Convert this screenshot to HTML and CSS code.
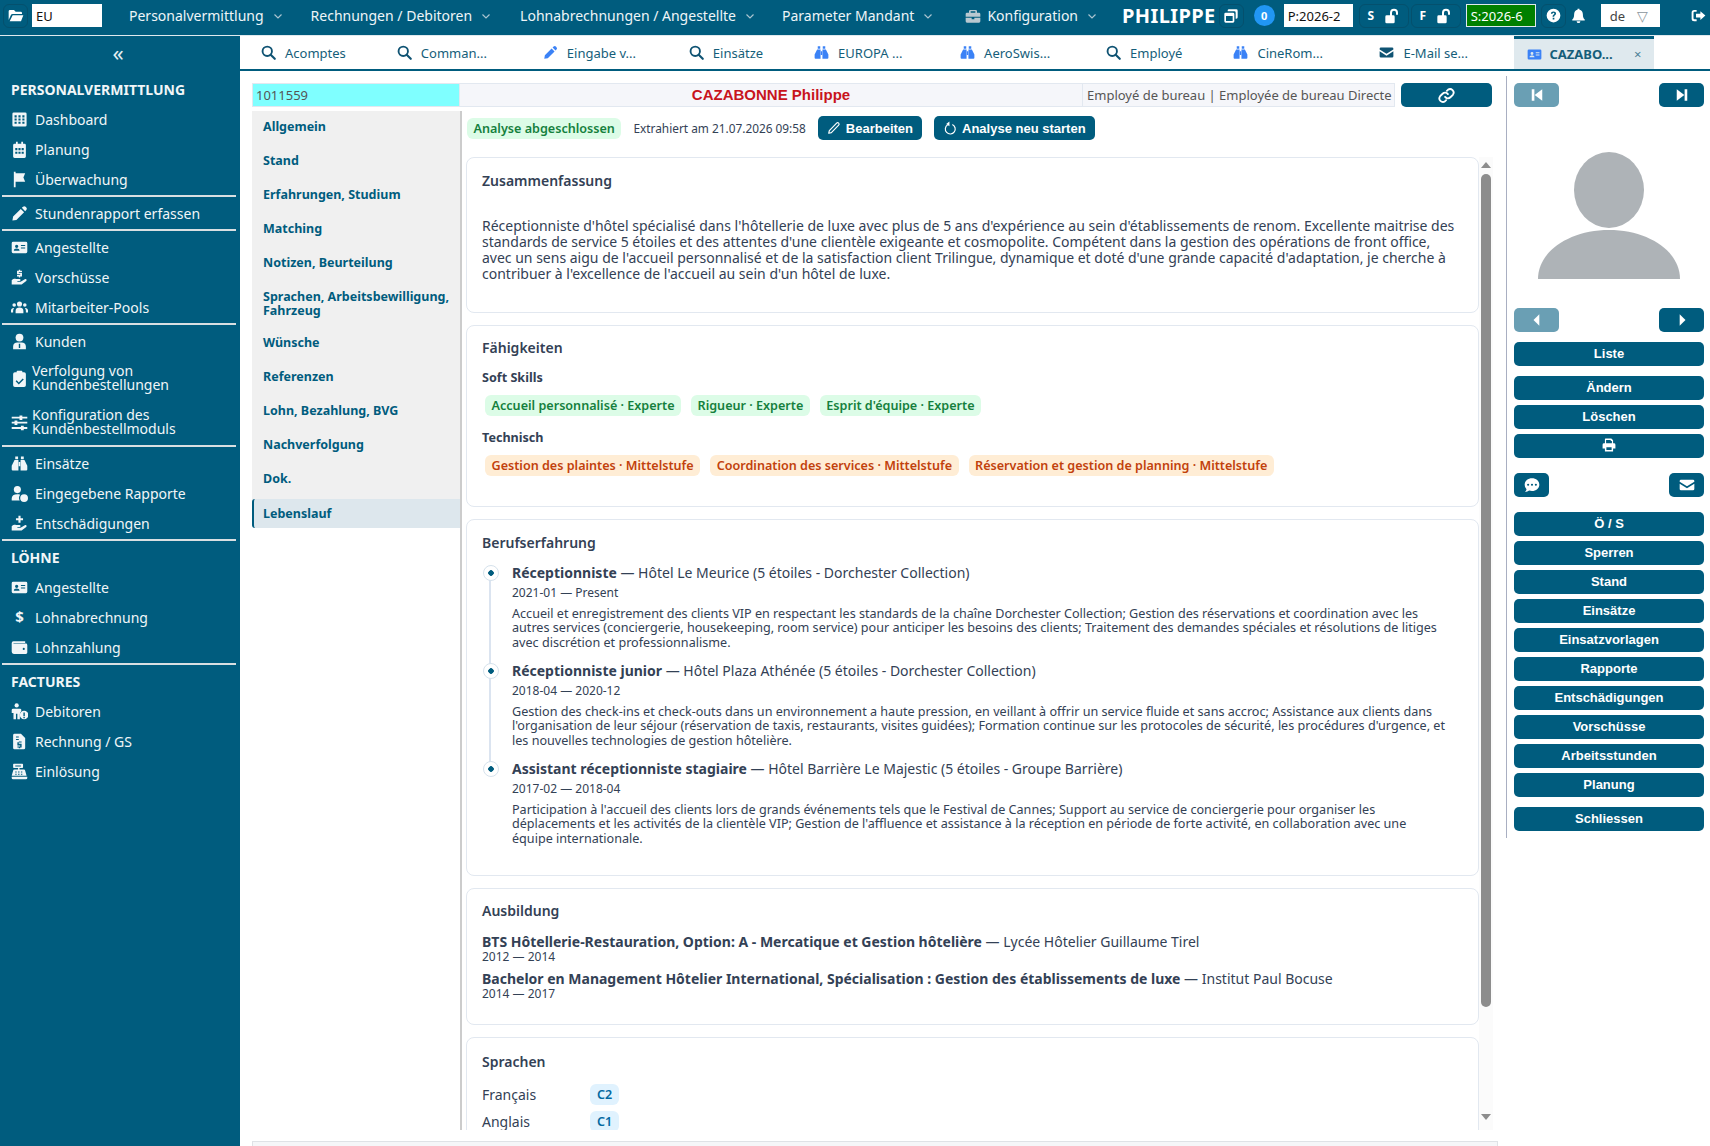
FILE: index.html
```html
<!DOCTYPE html>
<html lang="de">
<head>
    <meta charset="UTF-8">
    <title>CAZABONNE Philippe</title>
    <link rel="stylesheet" href="styles.css">
</head>
<body>
    <svg class="sprite" xmlns="http://www.w3.org/2000/svg">
        <symbol id="i-search" viewBox="0 0 24 24"><circle cx="10" cy="10" r="7.5" fill="none" stroke="currentColor" stroke-width="3"/><path d="M15.5 15.5 22 22" stroke="currentColor" stroke-width="3.4" stroke-linecap="round"/></symbol>
        <symbol id="i-pencil" viewBox="0 0 24 24"><path d="M17 2.5a2.6 2.6 0 0 1 3.6 0l1 1a2.6 2.6 0 0 1 0 3.6L20 8.7 15.3 4zM13.8 5.5l4.7 4.7L7.6 21 2 22l1-5.6z"/></symbol>
        <symbol id="i-pen-line" viewBox="0 0 24 24"><path d="M16.5 3.5a2.4 2.4 0 0 1 3.5 3.5L7.5 20 3 21l1-4.5z" fill="none" stroke="currentColor" stroke-width="2" stroke-linejoin="round"/></symbol>
        <symbol id="i-binoculars" viewBox="0 0 24 24"><path d="M6 2h4v4H6zM14 2h4v4h-4zM5 7h5.5v15H2.5a1.5 1.5 0 0 1-1.5-1.5V15zM13.500 7H19l4 8v5.500a1.500 1.500 0 0 1-1.500 1.500h-8zM11 10h2v6h-2z"/></symbol>
        <symbol id="i-envelope" viewBox="0 0 24 24"><path d="M3 4h18a2 2 0 0 1 2 2v1l-11 7L1 7V6a2 2 0 0 1 2-2zM1 10l11 7 11-7v8a2 2 0 0 1-2 2H3a2 2 0 0 1-2-2z"/></symbol>
        <symbol id="i-idcard" viewBox="0 0 24 24"><path fill-rule="evenodd" d="M3 4h18a2 2 0 0 1 2 2v12a2 2 0 0 1-2 2H3a2 2 0 0 1-2-2V6a2 2 0 0 1 2-2zm5 4a2.300 2.300 0 1 0 0 4.600A2.300 2.300 0 0 0 8 8zM4 16.500h8c0-2-1.500-3-4-3s-4 1-4 3zM14 8.500v1.500h6V8.500zm0 3.500v1.500h6V12z"/></symbol>
        <symbol id="i-folder" viewBox="0 0 24 24"><path d="M3 3h6l2.500 2.500H19a2 2 0 0 1 2 2V9H7a3 3 0 0 0-2.800 2L1 18V5a2 2 0 0 1 2-2zM7 11h16l-3.500 9H2.500z"/></symbol>
        <symbol id="i-grid" viewBox="0 0 24 24"><path fill-rule="evenodd" d="M4 2h16a2 2 0 0 1 2 2v16a2 2 0 0 1-2 2H4a2 2 0 0 1-2-2V4a2 2 0 0 1 2-2zm1 4v3h3V6zm5.500 0v3h3V6zM16 6v3h3V6zM5 10.500v3h3v-3zm5.500 0v3h3v-3zm5.500 0v3h3v-3zM5 15v3h3v-3zm5.500 0v3h3v-3zm5.500 0v3h3v-3z"/></symbol>
        <symbol id="i-calendar" viewBox="0 0 24 24"><path fill-rule="evenodd" d="M7 1h2.500v3h5V1H17v3h2a2 2 0 0 1 2 2v16a2 2 0 0 1-2 2H5a2 2 0 0 1-2-2V6a2 2 0 0 1 2-2h2zM6 10v3h3v-3zm4.500 0v3h3v-3zm4.500 0v3h3v-3zM6 15v3h3v-3zm4.500 0v3h3v-3zm4.500 0v3h3v-3z"/></symbol>
        <symbol id="i-flag" viewBox="0 0 24 24"><path d="M4 1h2.500v2H20l-2.500 6 2.500 6H6.500v8H4z"/></symbol>
        <symbol id="i-hand-dollar" viewBox="0 0 24 24"><path d="M11 1h2v1.500h2.500v2H11v1h4.500v5H13V12h-2v-1.500H8.500v-2H13v-1H8.500v-5H11zM1 16c2-2 4-2.500 6-2h5c2 0 2 3 0 3H9v1h4.500l6-3.500c2-1 3.500 1 2 2.500L15 22H1z"/></symbol>
        <symbol id="i-hand-plus" viewBox="0 0 24 24"><path d="M10.500 1h3v3.500H17v3h-3.500V11h-3V7.500H7v-3h3.500zM1 16c2-2 4-2.500 6-2h5c2 0 2 3 0 3H9v1h4.500l6-3.500c2-1 3.500 1 2 2.500L15 22H1z"/></symbol>
        <symbol id="i-users" viewBox="0 0 24 24"><circle cx="12" cy="7" r="3.600"/><circle cx="4.500" cy="8.500" r="2.500"/><circle cx="19.500" cy="8.500" r="2.500"/><path d="M6.500 20v-3.500c0-3 2.500-4.500 5.500-4.500s5.500 1.500 5.500 4.500V20zM0 19v-3c0-2 2-3.500 4.500-3.200-.9 1-1.500 2.300-1.500 3.700V19zM24 19v-3c0-2-2-3.500-4.500-3.200.9 1 1.500 2.300 1.500 3.700V19z"/></symbol>
        <symbol id="i-user-tie" viewBox="0 0 24 24"><circle cx="12" cy="6.500" r="5.500"/><path fill-rule="evenodd" d="M3 23v-4c0-3.500 2.500-5.500 6-5.500h6c3.500 0 6 2 6 5.500v4zM11 15v6h2v-6z"/></symbol>
        <symbol id="i-clipboard" viewBox="0 0 24 24"><path fill-rule="evenodd" d="M9 1h6a1 1 0 0 1 1 1v1h2.500A2.500 2.500 0 0 1 21 5.500v16a2.500 2.500 0 0 1-2.500 2.500h-13A2.500 2.500 0 0 1 3 21.500v-16A2.500 2.500 0 0 1 5.500 3H8V2a1 1 0 0 1 1-1zm7.500 11L11 17.500 8 14.500l-1.500 1.500L11 20.500 18 13.500z"/></symbol>
        <symbol id="i-sliders" viewBox="0 0 24 24"><path d="M1 4h11V2h4v2h7v2.500h-7v2h-4v-2H1zM1 11h4V9h4v2h14v2.500H9v2H5v-2H1zM1 18.500h13v-2h4v2h5V21h-5v2h-4v-2H1z"/></symbol>
        <symbol id="i-user-clock" viewBox="0 0 24 24"><circle cx="9" cy="6.500" r="5"/><path d="M1 22v-3c0-4 3-6 8-6 1.500 0 2.800.2 4 .7-1 1.300-1.700 3-1.700 4.800 0 1.300.3 2.500 1 3.500z"/><circle cx="18.500" cy="18.500" r="5.500"/></symbol>
        <symbol id="i-wallet" viewBox="0 0 24 24"><path fill-rule="evenodd" d="M3.500 3H20v2.500H3.500v1H21a2 2 0 0 1 2 2V19a2 2 0 0 1-2 2H4a3 3 0 0 1-3-3V5.500A2.500 2.500 0 0 1 3.500 3zM18 12.500a1.500 1.500 0 1 0 0 3 1.500 1.500 0 0 0 0-3z"/></symbol>
        <symbol id="i-person-alert" viewBox="0 0 24 24"><circle cx="8" cy="3.500" r="3"/><path d="M3 8h10a2 2 0 0 1 1.500 1v2.500a7 7 0 0 0-2 4V23H9v-8H7v8H3.500v-9H1V10a2 2 0 0 1 2-2z"/><path fill-rule="evenodd" d="M18.500 11a6 6 0 1 1 0 12 6 6 0 0 1 0-12zm-1 2.500v5h2v-5zm0 6v2h2v-2z"/></symbol>
        <symbol id="i-invoice" viewBox="0 0 24 24"><path fill-rule="evenodd" d="M5 1h9l6 6v14a2 2 0 0 1-2 2H5a2 2 0 0 1-2-2V3a2 2 0 0 1 2-2zm2 4v1.500h4V5zm0 3.500V10h4V8.500zm4 3.500v1H9v4.500h4V19H9v1.500h2v1h2v-1h2V15h-4v-1.500h4V12z"/></symbol>
        <symbol id="i-register" viewBox="0 0 24 24"><path fill-rule="evenodd" d="M4 1h12a1 1 0 0 1 1 1v4a1 1 0 0 1-1 1h-4v2h6a2 2 0 0 1 2 2l2 7H1l2-7a2 2 0 0 1 2-2h5V7H4a1 1 0 0 1-1-1V2a1 1 0 0 1 1-1zm2 2.500V5h8V3.500zM6 12v1.500h2V12zm4 0v1.500h2V12zm4 0v1.500h2V12zM6 15v1.500h2V15zm4 0v1.500h2V15zm4 0v1.500h2V15zM1 19.500h22V21a2 2 0 0 1-2 2H3a2 2 0 0 1-2-2z"/></symbol>
        <symbol id="i-briefcase" viewBox="0 0 24 24"><path d="M8 3h8a2 2 0 0 1 2 2v2h3a2 2 0 0 1 2 2v4H1V9a2 2 0 0 1 2-2h3V5a2 2 0 0 1 2-2zm.500 2v2h7V5zM1 14.500h9V17h4v-2.500h9V20a2 2 0 0 1-2 2H3a2 2 0 0 1-2-2z"/></symbol>
        <symbol id="i-copy" viewBox="0 0 24 24"><path fill-rule="evenodd" d="M9 2h11a2 2 0 0 1 2 2v10a2 2 0 0 1-2 2h-1V7a2 2 0 0 0-2-2H7V4a2 2 0 0 1 2-2zM4 7h11a2 2 0 0 1 2 2v11a2 2 0 0 1-2 2H4a2 2 0 0 1-2-2V9a2 2 0 0 1 2-2zm.500 5v7.500h10V12z"/></symbol>
        <symbol id="i-unlock" viewBox="0 0 24 24"><path d="M15 1a6 6 0 0 1 6 6v3h-3V7a3 3 0 0 0-6 0v4h2a2 2 0 0 1 2 2v8a2 2 0 0 1-2 2H4a2 2 0 0 1-2-2v-8a2 2 0 0 1 2-2h5V7a6 6 0 0 1 6-6z"/></symbol>
        <symbol id="i-question" viewBox="0 0 24 24"><path fill-rule="evenodd" d="M12 1a11 11 0 1 1 0 22 11 11 0 0 1 0-22zm0 4.500c-2.500 0-4 1.400-4.200 3.500h2.600c.1-.8.700-1.300 1.500-1.300.9 0 1.500.5 1.500 1.200 0 1.700-3 1.700-3 5h2.600c0-2.300 3.100-2.500 3.100-5.100 0-2.200-1.700-3.300-4.100-3.300zM10.700 15.500v2.800h2.700v-2.800z"/></symbol>
        <symbol id="i-bell" viewBox="0 0 24 24"><path d="M10.500 1h3v1.800C17 3.500 19 6.300 19 10c0 5 1 6.500 3 8.500V20H2v-1.500c2-2 3-3.500 3-8.500 0-3.700 2-6.500 5.500-7.200zM9 21h6a3 3 0 0 1-6 0z"/></symbol>
        <symbol id="i-logout" viewBox="0 0 24 24"><path d="M9 3v3H5.500A1.500 1.500 0 0 0 4 7.500v9A1.500 1.500 0 0 0 5.500 18H9v3H5a4 4 0 0 1-4-4V7a4 4 0 0 1 4-4zM15 5l8 7-8 7v-4H8V9h7z"/></symbol>
        <symbol id="i-link" viewBox="0 0 24 24"><path d="M10 14a5 5 0 0 0 7.500.5l3.500-3.500A5 5 0 0 0 14 4l-1.500 1.500M14 10a5 5 0 0 0-7.500-.5L3 13a5 5 0 0 0 7 7l1.500-1.500" fill="none" stroke="currentColor" stroke-width="2.600" stroke-linecap="round"/></symbol>
        <symbol id="i-refresh" viewBox="0 0 24 24"><path d="M8 6.500A8.500 8.500 0 1 0 16 6" fill="none" stroke="currentColor" stroke-width="2"/><path d="M11 1v8L5.500 5z"/></symbol>
        <symbol id="i-first" viewBox="0 0 24 24"><path d="M3 2h4.500v20H3zM21 2v20L8 12z"/></symbol>
        <symbol id="i-last" viewBox="0 0 24 24"><path d="M21 2h-4.500v20H21zM3 2v20l13-10z"/></symbol>
        <symbol id="i-prev" viewBox="0 0 24 24"><path d="M16 2v20L6 12z"/></symbol>
        <symbol id="i-next" viewBox="0 0 24 24"><path d="M8 2v20l10-10z"/></symbol>
        <symbol id="i-print" viewBox="0 0 24 24"><path fill-rule="evenodd" d="M6 1h10l3 3v5h1.500A2.500 2.500 0 0 1 23 11.500V18h-4v5H5v-5H1v-6.500A2.500 2.500 0 0 1 3.500 9H5V2a1 1 0 0 1 1-1zm1 2.500V9h10V5h-2V3.500zM7.500 16v4.500h9V16z"/></symbol>
        <symbol id="i-chat" viewBox="0 0 24 24"><path fill-rule="evenodd" d="M12 2c6 0 11 4 11 9.500S18 21 12 21c-1.500 0-3-.3-4.300-.7C6 21.600 4 22.500 1.500 22.500c1.200-1.300 2-2.800 2.300-4.300A9 9 0 0 1 1 11.500C1 6 6 2 12 2zM6.200 10a1.600 1.600 0 1 0 0 3.200 1.600 1.600 0 0 0 0-3.200zm5.800 0a1.600 1.600 0 1 0 0 3.200 1.600 1.600 0 0 0 0-3.200zm5.800 0a1.600 1.600 0 1 0 0 3.200 1.600 1.600 0 0 0 0-3.200z"/></symbol>
        <symbol id="i-chevron" viewBox="0 0 10 10"><path d="M1.500 3.500 5 7l3.500-3.500" fill="none" stroke="currentColor" stroke-width="1.200"/></symbol>
    </svg>

    <!-- top bar -->
    <header class="topbar">
        <span class="icon-box folder-box"><svg class="ico"><use href="#i-folder"/></svg></span>
        <span class="field eu-field">EU</span>
        <a class="menu m1">Personalvermittlung <svg class="chev"><use href="#i-chevron"/></svg></a>
        <a class="menu m2">Rechnungen / Debitoren <svg class="chev"><use href="#i-chevron"/></svg></a>
        <a class="menu m3">Lohnabrechnungen / Angestellte <svg class="chev"><use href="#i-chevron"/></svg></a>
        <a class="menu m4">Parameter Mandant <svg class="chev"><use href="#i-chevron"/></svg></a>
        <a class="menu m5"><svg class="ico muted"><use href="#i-briefcase"/></svg> Konfiguration <svg class="chev"><use href="#i-chevron"/></svg></a>
        <strong class="user-name">PHILIPPE</strong>
        <span class="icon-box copy-box"><svg class="ico"><use href="#i-copy"/></svg></span>
        <span class="count-badge">0</span>
        <span class="field period-field">P:2026-2</span>
        <span class="icon-box lock-box"><b>S</b><svg class="ico"><use href="#i-unlock"/></svg></span>
        <span class="icon-box lock-box"><b>F</b><svg class="ico"><use href="#i-unlock"/></svg></span>
        <span class="field green-field">S:2026-6</span>
        <span class="icon-box help-box"><svg class="ico"><use href="#i-question"/></svg></span>
        <svg class="ico bell"><use href="#i-bell"/></svg>
        <span class="field lang-field">de <i class="tri">▽</i></span>
        <svg class="ico logout"><use href="#i-logout"/></svg>
    </header>

    <div class="layout">
        <!-- sidebar -->
        <nav class="sidebar">
            <div class="collapse">«</div>
            <div class="side-title first">PERSONALVERMITTLUNG</div>
            <a class="side-item"><svg class="ico"><use href="#i-grid"/></svg>Dashboard</a>
            <a class="side-item"><svg class="ico"><use href="#i-calendar"/></svg>Planung</a>
            <a class="side-item"><svg class="ico"><use href="#i-flag"/></svg>Überwachung</a>
            <hr class="side-sep">
            <a class="side-item"><svg class="ico"><use href="#i-pencil"/></svg>Stundenrapport erfassen</a>
            <hr class="side-sep">
            <a class="side-item"><svg class="ico"><use href="#i-idcard"/></svg>Angestellte</a>
            <a class="side-item"><svg class="ico"><use href="#i-hand-dollar"/></svg>Vorschüsse</a>
            <a class="side-item"><svg class="ico"><use href="#i-users"/></svg>Mitarbeiter-Pools</a>
            <hr class="side-sep">
            <a class="side-item"><svg class="ico"><use href="#i-user-tie"/></svg>Kunden</a>
            <a class="side-item two-line"><svg class="ico"><use href="#i-clipboard"/></svg><span>Verfolgung von<br>Kundenbestellungen</span></a>
            <a class="side-item two-line"><svg class="ico"><use href="#i-sliders"/></svg><span>Konfiguration des<br>Kundenbestellmoduls</span></a>
            <hr class="side-sep">
            <a class="side-item"><svg class="ico"><use href="#i-binoculars"/></svg>Einsätze</a>
            <a class="side-item"><svg class="ico"><use href="#i-user-clock"/></svg>Eingegebene Rapporte</a>
            <a class="side-item"><svg class="ico"><use href="#i-hand-plus"/></svg>Entschädigungen</a>
            <hr class="side-sep">
            <div class="side-title">LÖHNE</div>
            <a class="side-item"><svg class="ico"><use href="#i-idcard"/></svg>Angestellte</a>
            <a class="side-item"><span class="ico dollar">$</span>Lohnabrechnung</a>
            <a class="side-item"><svg class="ico"><use href="#i-wallet"/></svg>Lohnzahlung</a>
            <hr class="side-sep">
            <div class="side-title">FACTURES</div>
            <a class="side-item"><svg class="ico"><use href="#i-person-alert"/></svg>Debitoren</a>
            <a class="side-item"><svg class="ico"><use href="#i-invoice"/></svg>Rechnung / GS</a>
            <a class="side-item"><svg class="ico"><use href="#i-register"/></svg>Einlösung</a>
        </nav>

        <main class="main">
            <!-- tabs -->
            <div class="tabs">
                <a class="tab"><svg class="ico dark"><use href="#i-search"/></svg><span>Acomptes</span></a>
                <a class="tab cut"><svg class="ico dark"><use href="#i-search"/></svg><span>Comman...</span></a>
                <a class="tab cut"><svg class="ico blue"><use href="#i-pencil"/></svg><span>Eingabe v...</span></a>
                <a class="tab"><svg class="ico dark"><use href="#i-search"/></svg><span>Einsätze</span></a>
                <a class="tab cut"><svg class="ico blue"><use href="#i-binoculars"/></svg><span>EUROPA ...</span></a>
                <a class="tab cut"><svg class="ico blue"><use href="#i-binoculars"/></svg><span>AeroSwis...</span></a>
                <a class="tab"><svg class="ico dark"><use href="#i-search"/></svg><span>Employé</span></a>
                <a class="tab cut"><svg class="ico blue"><use href="#i-binoculars"/></svg><span>CineRom...</span></a>
                <a class="tab cut"><svg class="ico dark"><use href="#i-envelope"/></svg><span>E-Mail se...</span></a>
                <a class="tab active"><svg class="ico blue"><use href="#i-idcard"/></svg><span>CAZABO...</span><i class="tab-close">×</i></a>
            </div>

            <div class="workspace">
                <section class="record">
                    <div class="id-row">
                        <span class="id-no">1011559</span>
                        <span class="id-name">CAZABONNE Philippe</span>
                        <span class="id-job">Employé de bureau | Employée de bureau Directe</span>
                        <button class="btn link-btn"><svg class="ico"><use href="#i-link"/></svg></button>
                    </div>
                    <div class="record-body">
                        <ul class="subnav">
                            <li>Allgemein</li>
                            <li>Stand</li>
                            <li>Erfahrungen, Studium</li>
                            <li>Matching</li>
                            <li>Notizen, Beurteilung</li>
                            <li class="wrap">Sprachen, Arbeitsbewilligung, Fahrzeug</li>
                            <li>Wünsche</li>
                            <li>Referenzen</li>
                            <li>Lohn, Bezahlung, BVG</li>
                            <li>Nachverfolgung</li>
                            <li>Dok.</li>
                            <li class="current">Lebenslauf</li>
                        </ul>
                        <div class="cv">
                            <div class="cv-status">
                                <span class="chip green status-chip">Analyse abgeschlossen</span>
                                <span class="extracted">Extrahiert am 21.07.2026 09:58</span>
                                <button class="btn cv-btn"><svg class="ico"><use href="#i-pen-line"/></svg>Bearbeiten</button>
                                <button class="btn cv-btn"><svg class="ico"><use href="#i-refresh"/></svg>Analyse neu starten</button>
                            </div>
                            <div class="cv-scroll">
                                <div class="cards">
                                    <article class="card summary">
                                        <h3>Zusammenfassung</h3>
                                        <p>Réceptionniste d'hôtel spécialisé dans l'hôtellerie de luxe avec plus de 5 ans d'expérience au sein d'établissements de renom. Excellente maitrise des standards de service 5 étoiles et des attentes d'une clientèle exigeante et cosmopolite. Compétent dans la gestion des opérations de front office, avec un sens aigu de l'accueil personnalisé et de la satisfaction client Trilingue, dynamique et doté d'une grande capacité d'adaptation, je cherche à contribuer à l'excellence de l'accueil au sein d'un hôtel de luxe.</p>
                                    </article>
                                    <article class="card skills">
                                        <h3>Fähigkeiten</h3>
                                        <h4>Soft Skills</h4>
                                        <div class="chips">
                                            <span class="chip green">Accueil personnalisé · Experte</span>
                                            <span class="chip green">Rigueur · Experte</span>
                                            <span class="chip green">Esprit d'équipe · Experte</span>
                                        </div>
                                        <h4>Technisch</h4>
                                        <div class="chips">
                                            <span class="chip orange">Gestion des plaintes · Mittelstufe</span>
                                            <span class="chip orange">Coordination des services · Mittelstufe</span>
                                            <span class="chip orange">Réservation et gestion de planning · Mittelstufe</span>
                                        </div>
                                    </article>
                                    <article class="card jobs">
                                        <h3>Berufserfahrung</h3>
                                        <div class="job">
                                            <div class="job-title"><b>Réceptionniste</b> — Hôtel Le Meurice (5 étoiles - Dorchester Collection)</div>
                                            <div class="job-date">2021-01 — Present</div>
                                            <p>Accueil et enregistrement des clients VIP en respectant les standards de la chaîne Dorchester Collection; Gestion des réservations et coordination avec les autres services (conciergerie, housekeeping, room service) pour anticiper les besoins des clients; Traitement des demandes spéciales et résolutions de litiges avec discrétion et professionnalisme.</p>
                                        </div>
                                        <div class="job">
                                            <div class="job-title"><b>Réceptionniste junior</b> — Hôtel Plaza Athénée (5 étoiles - Dorchester Collection)</div>
                                            <div class="job-date">2018-04 — 2020-12</div>
                                            <p>Gestion des check-ins et check-outs dans un environnement a haute pression, en veillant à offrir un service fluide et sans accroc; Assistance aux clients dans l'organisation de leur séjour (réservation de taxis, restaurants, visites guidées); Formation continue sur les protocoles de sécurité, les procédures d'urgence, et les nouvelles technologies de gestion hôtelière.</p>
                                        </div>
                                        <div class="job last">
                                            <div class="job-title"><b>Assistant réceptionniste stagiaire</b> — Hôtel Barrière Le Majestic (5 étoiles - Groupe Barrière)</div>
                                            <div class="job-date">2017-02 — 2018-04</div>
                                            <p>Participation à l'accueil des clients lors de grands événements tels que le Festival de Cannes; Support au service de conciergerie pour organiser les déplacements et les activités de la clientèle VIP; Gestion de l'affluence et assistance à la réception en période de forte activité, en collaboration avec une équipe internationale.</p>
                                        </div>
                                    </article>
                                    <article class="card education">
                                        <h3>Ausbildung</h3>
                                        <div class="edu"><div class="job-title"><b>BTS Hôtellerie-Restauration, Option: A - Mercatique et Gestion hôtelière</b> — Lycée Hôtelier Guillaume Tirel</div><div class="edu-date">2012 — 2014</div></div>
                                        <div class="edu"><div class="job-title"><b>Bachelor en Management Hôtelier International, Spécialisation : Gestion des établissements de luxe</b> — Institut Paul Bocuse</div><div class="edu-date">2014 — 2017</div></div>
                                    </article>
                                    <article class="card languages">
                                        <h3>Sprachen</h3>
                                        <div class="lang-row"><span>Français</span><span class="chip blue-chip">C2</span></div>
                                        <div class="lang-row"><span>Anglais</span><span class="chip blue-chip">C1</span></div>
                                    </article>
                                </div>
                                <div class="scrollbar">
                                    <i class="arrow up"></i>
                                    <div class="thumb"></div>
                                    <i class="arrow down"></i>
                                </div>
                            </div>
                        </div>
                    </div>
                    <div class="bottom-bar"></div>
                </section>

                <!-- right actions -->
                <aside class="actions">
                    <div class="btn-pair">
                        <button class="btn small disabled"><svg class="ico"><use href="#i-first"/></svg></button>
                        <button class="btn small"><svg class="ico"><use href="#i-last"/></svg></button>
                    </div>
                    <svg class="avatar" viewBox="0 0 190 192">
                        <ellipse cx="95" cy="78" rx="35" ry="38" fill="#aeb3b7"/>
                        <path d="M24 167c0-28 32-49 71-49s71 21 71 49z" fill="#aeb3b7"/>
                    </svg>
                    <div class="btn-pair">
                        <button class="btn small disabled"><svg class="ico"><use href="#i-prev"/></svg></button>
                        <button class="btn small"><svg class="ico"><use href="#i-next"/></svg></button>
                    </div>
                    <button class="btn wide gap-top">Liste</button>
                    <button class="btn wide gap-md">Ändern</button>
                    <button class="btn wide">Löschen</button>
                    <button class="btn wide"><svg class="ico"><use href="#i-print"/></svg></button>
                    <div class="btn-pair gap-lg">
                        <button class="btn tiny"><svg class="ico"><use href="#i-chat"/></svg></button>
                        <button class="btn tiny"><svg class="ico"><use href="#i-envelope"/></svg></button>
                    </div>
                    <button class="btn wide gap-lg">Ö / S</button>
                    <button class="btn wide">Sperren</button>
                    <button class="btn wide">Stand</button>
                    <button class="btn wide">Einsätze</button>
                    <button class="btn wide">Einsatzvorlagen</button>
                    <button class="btn wide">Rapporte</button>
                    <button class="btn wide">Entschädigungen</button>
                    <button class="btn wide">Vorschüsse</button>
                    <button class="btn wide">Arbeitsstunden</button>
                    <button class="btn wide">Planung</button>
                    <button class="btn wide gap-close">Schliessen</button>
                </aside>
            </div>
        </main>
    </div>
</body>
</html>
```

FILE: styles.css
```css
:root {
    --teal: #005c7e;
    --teal-off: #6a9fb4;
    --ink: #334155;
    --line: #e2e8f0;
}

* { box-sizing: border-box; }

body {
    margin: 0;
    height: 1146px;
    overflow: hidden;
    background: white;
    font-family: "Noto Sans", sans-serif;
    font-size: 14px;
    color: var(--ink);
}

.sprite { display: none; }

.ico {
    width: 16px;
    height: 16px;
    fill: currentColor;
    flex: none;
}

/* top bar */
.topbar {
    display: flex;
    align-items: center;
    height: 36px;
    padding-bottom: 4px;
    background: var(--teal);
    border-bottom: 1px solid #dfe9ee;
    color: white;
}

.icon-box {
    display: flex;
    align-items: center;
    justify-content: center;
    height: 24px;
    border: 1px solid #04506d;
    border-radius: 6px;
}

.folder-box { width: 25px; margin-left: 3px; }

.field {
    display: flex;
    align-items: center;
    height: 23px;
    padding: 0 4px;
    background: white;
    color: #111;
    font-size: 13px;
}

.eu-field { width: 70px; margin-left: 4px; }

.menu {
    display: flex;
    align-items: center;
    gap: 6px;
    white-space: nowrap;
    color: #eef5f8;
}

.menu .muted { color: #b9c8d0; }
.chev { width: 10px; height: 10px; margin-left: 3px; color: #a9c4d0; }

.m1 { margin-left: 27px; }
.m2 { margin-left: 28px; }
.m3 { margin-left: 29px; }
.m4 { margin-left: 27px; }
.m5 { margin-left: 32px; }

.user-name {
    margin-left: 25px;
    font-size: 20px;
    letter-spacing: 0.4px;
}

.copy-box { width: 25px; margin-left: 3px; }

.count-badge {
    width: 21px;
    height: 21px;
    margin-left: 10px;
    border-radius: 50%;
    background: #2196f3;
    font-size: 11px;
    font-weight: 700;
    line-height: 21px;
    text-align: center;
}

.period-field { width: 69px; margin-left: 9px; }

.lock-box {
    gap: 10px;
    width: 50px;
    margin-left: 6px;
    font-size: 12px;
}

.lock-box .ico { width: 16px; height: 16px; }
.lock-box + .lock-box { margin-left: 2px; }

.green-field {
    width: 70px;
    margin-left: 5px;
    background: #008000;
    border: 1px solid #dfe9ee;
    color: white;
}

.help-box { width: 25px; margin-left: 5px; }
.help-box .ico { width: 15px; height: 15px; }
.bell { margin-left: 5px; width: 15px; height: 15px; }

.lang-field {
    justify-content: space-between;
    width: 59px;
    margin-left: 15px;
    padding: 0 12px 0 9px;
    color: #444;
}

.tri {
    font-family: "DejaVu Sans", sans-serif;
    font-style: normal;
    font-size: 14px;
    color: #8a959c;
}

.logout { margin-left: 31px; width: 15px; height: 15px; }

/* page */
.layout {
    display: flex;
    height: 1110px;
}

.sidebar {
    flex: none;
    width: 240px;
    background: var(--teal);
    color: #f1f6f8;
}

.collapse {
    height: 35px;
    padding-right: 4px;
    font-size: 22px;
    line-height: 32px;
    text-align: center;
    color: #e4eef2;
}

.side-title {
    height: 30px;
    padding-left: 11px;
    font-weight: 700;
    line-height: 32px;
}

.side-title.first { height: 31px; margin-top: 2px; line-height: 33px; }

.side-item {
    display: flex;
    align-items: center;
    gap: 7px;
    height: 30px;
    padding-left: 11px;
    white-space: nowrap;
}

.side-item .ico { width: 17px; height: 17px; margin-top: 1px; }

.two-line {
    gap: 4px;
    height: 44px;
    line-height: 14px;
}

.side-item .dollar {
    font-weight: 700;
    font-size: 15px;
    line-height: 15px;
    text-align: center;
}

.side-sep {
    height: 2px;
    margin: 1px 4px 1px 2px;
    border: 0;
    background: #d9dfe2;
}

.main {
    display: flex;
    flex: 1;
    flex-direction: column;
    min-width: 0;
}

/* tabs */
.tabs {
    display: flex;
    flex: none;
    height: 35px;
    border-bottom: 2px solid var(--teal);
}

.tab {
    display: flex;
    align-items: center;
    gap: 9px;
    padding: 0 30px 0 21px;
    font-size: 13px;
    color: #155e7a;
    white-space: nowrap;
}

.tab.cut { width: 146px; }

.tab .ico { width: 15px; height: 15px; }
.ico.dark { color: #0f5373; }
.ico.blue { color: #3b82f6; }

.tab.active {
    position: relative;
    gap: 7px;
    width: 140px;
    margin-left: 10px;
    padding: 0 0 0 13px;
    background: #dfe9ee;
    border-top: 3px solid var(--teal);
    font-weight: 700;
}

.tab-close {
    position: absolute;
    right: 13px;
    font-style: normal;
    font-weight: 400;
    color: #4d7f95;
}

.workspace {
    display: flex;
    flex: 1;
    min-height: 0;
}

.record {
    flex: 1;
    min-width: 0;
    padding: 12px 8px 0 12px;
}

.id-row {
    display: flex;
    align-items: stretch;
    height: 24px;
    margin-right: 6px;
    font-size: 13px;
}

.id-no {
    width: 208px;
    padding-left: 3px;
    background: #7fffff;
    border: 1px solid var(--line);
    color: #555;
    line-height: 22px;
}

.id-name {
    flex: 1;
    background: #f5f6fa;
    border-top: 1px solid var(--line);
    border-bottom: 1px solid var(--line);
    font-family: "Liberation Sans", sans-serif;
    font-size: 15px;
    font-weight: 700;
    line-height: 22px;
    text-align: center;
    color: #c8141c;
}

.id-job {
    width: 313px;
    padding-left: 4px;
    background: #f5f6fa;
    border: 1px solid var(--line);
    line-height: 22px;
    color: #555;
    white-space: nowrap;
    overflow: hidden;
}

.btn {
    display: flex;
    align-items: center;
    justify-content: center;
    height: 24px;
    padding: 0;
    border: 0;
    border-radius: 5px;
    background: var(--teal);
    color: white;
    font-family: "Liberation Sans", sans-serif;
    font-size: 13px;
    font-weight: 700;
}

.link-btn {
    width: 91px;
    margin-left: 6px;
}

.btn.link-btn .ico { width: 17px; height: 17px; }

.record-body {
    display: flex;
    height: 1019px;
    margin: 4px 5px 0 0;
}

.subnav {
    flex: none;
    width: 210px;
    margin: 0;
    padding: 0;
    list-style: none;
    background: linear-gradient(#f0f0f0, #f0f0f0) 0 0 / 100% 415px no-repeat;
    border-right: 2px solid #ccc;
    font-size: 12.5px;
    font-weight: 700;
    color: var(--teal);
}

.subnav li {
    display: flex;
    align-items: center;
    height: 34px;
    padding: 0 11px;
    line-height: 14px;
}

.subnav li:first-child { height: 33px; padding-bottom: 2px; }

.subnav .wrap { height: 47px; margin-bottom: -1px; }
.subnav .current {
    height: 29px;
    margin-top: 3px;
    padding-left: 9px;
    background: #dde7ed;
    border-left: 2px solid var(--teal);
    border-radius: 3px 0 0 3px;
}

.cv {
    display: flex;
    flex: 1;
    flex-direction: column;
    min-width: 0;
    padding-left: 4px;
}

.cv-status {
    display: flex;
    align-items: center;
    flex: none;
    height: 24px;
    margin-top: 5px;
    font-size: 11.85px;
}

.chip {
    padding: 2px 6.5px;
    border-radius: 6px;
    font-size: 12.6px;
    font-weight: 600;
    line-height: 17px;
    white-space: nowrap;
}

.chip.green { background: #dcfce7; color: #15803d; }
.chip.orange { background: #ffedd5; color: #c2410c; }
.chip.blue-chip { background: #e0f2fe; color: #0369a1; padding: 2px 7px; }

.status-chip { margin-left: 1px; }

.extracted { margin-left: 12px; }

.cv-btn {
    gap: 5px;
    margin-left: 12px;
    padding: 0 9px;
}

.cv-btn .ico { width: 14px; height: 14px; }

.cv-scroll {
    display: flex;
    flex: 1;
    min-height: 0;
    margin-top: 17px;
}

.cards {
    display: flex;
    flex: 1;
    flex-direction: column;
    gap: 12px;
    min-width: 0;
    overflow: hidden;
}

.card {
    flex: none;
    padding: 13px 15px;
    border: 1px solid var(--line);
    border-radius: 8px;
}

.card h3 {
    margin: 0;
    font-size: 14px;
    font-weight: 600;
    line-height: 20px;
}

.card h4 {
    margin: 0;
    font-size: 12.6px;
    font-weight: 700;
    line-height: 18px;
}

.summary { height: 156px; }
.summary h3 { margin-bottom: 27px; }

.summary p {
    margin: 0;
    font-size: 14px;
    line-height: 16px;
}

.skills { height: 182px; padding-top: 12px; }
.skills h4 { margin-top: 11px; }

.chips {
    display: flex;
    gap: 10px;
    margin: 8px 0 0 3px;
}

.skills .chips + h4 { margin-top: 13px; }

.jobs { height: 357px; }
.jobs h3 { margin-bottom: 10px; }

.job {
    position: relative;
    height: 98px;
    padding: 0 15px 0 30px;
}

.job::before {
    content: "";
    position: absolute;
    left: 7px;
    top: 10px;
    bottom: -8px;
    width: 2px;
    background: #dbe4f0;
}

.job.last::before { display: none; }

.job::after {
    content: "";
    position: absolute;
    left: 1px;
    top: 2px;
    width: 14px;
    height: 14px;
    border: 1.5px solid #d6e2ec;
    border-radius: 50%;
    background: radial-gradient(circle, var(--teal) 2.5px, white 3px);
}

.job-title {
    font-size: 14px;
    line-height: 20px;
}

.job-date {
    margin-top: 1px;
    font-size: 12px;
    line-height: 18px;
}

.job p {
    margin: 4.5px 0 0;
    font-size: 12.6px;
    line-height: 14.5px;
}

.education { height: 137px; padding-top: 12px; }
.education h3 { margin-bottom: 13px; }
.edu { margin-bottom: 8px; line-height: 15px; }
.edu .job-title { line-height: 16px; }
.edu-date { font-size: 12px; line-height: 13px; }

.languages { height: 130px; padding-top: 14px; }
.languages h3 { margin: 0 0 9px; }

.lang-row {
    display: flex;
    align-items: center;
    height: 27px;
}

.lang-row > span:first-child { width: 108px; }

/* fake scrollbar, the real one is not drawn in the headless window */
.scrollbar {
    display: flex;
    flex: none;
    flex-direction: column;
    align-items: center;
    width: 14px;
    background: #fbfbfb;
}

.thumb {
    width: 10px;
    height: 833px;
    margin-top: 6px;
    margin-bottom: auto;
    border-radius: 5px;
    background: #8d8d8d;
}

.arrow {
    width: 0;
    height: 0;
    margin-top: 5px;
    border-left: 5px solid transparent;
    border-right: 5px solid transparent;
}

.arrow.up { border-bottom: 6px solid #8d8d8d; }
.arrow.down { margin: 0 0 10px; border-top: 6px solid #8d8d8d; }

.bottom-bar {
    height: 8px;
    margin-top: 11px;
    background: #f5f6f8;
    border: 1px solid #dfe2e6;
}

/* right column */
.actions {
    display: flex;
    flex: none;
    flex-direction: column;
    gap: 5px;
    width: 204px;
    height: 762px;
    margin-top: 5px;
    padding: 7px 6px 0 7px;
    border-left: 1px solid #a9afc2;
}

.btn-pair {
    display: flex;
    justify-content: space-between;
}

.btn.small { width: 45px; }
.btn.tiny { width: 35px; }
.btn.tiny .ico { width: 16px; height: 16px; }
.btn.disabled { background: var(--teal-off); }
.btn .ico { width: 14px; height: 14px; }
.btn.wide { width: 100%; padding-bottom: 2px; }

.avatar {
    flex: none;
    width: 190px;
    height: 192px;
    margin-bottom: -1px;
}

.gap-top { margin-top: 5px; }
.gap-md { margin-top: 5px; }
.gap-lg { margin-top: 10px; }
.gap-close { margin-top: 5px; }
```
